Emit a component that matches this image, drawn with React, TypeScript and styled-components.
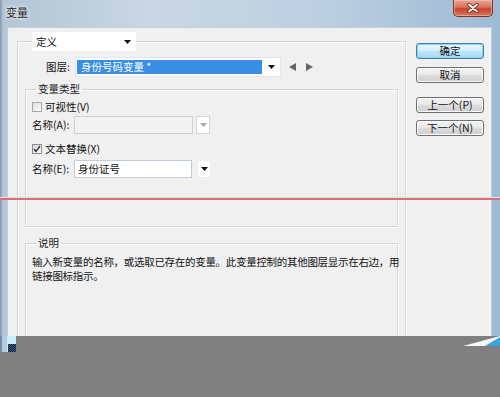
import React from "react";
import styled, { createGlobalStyle } from "styled-components";

const Global = createGlobalStyle`
  html, body { margin: 0; padding: 0; background: #808080; }
  body {
    width: 500px; height: 397px; overflow: hidden;
    font-family: "Noto Sans CJK SC", "Noto Sans", sans-serif;
    font-size: 10.5px; color: #111;
  }
  * { box-sizing: border-box; }
`;

const Screen = styled.div`
  position: relative;
  width: 500px;
  height: 397px;
  overflow: hidden;
  background: #808080;
`;

const Window = styled.div`
  width: 500px;
  height: 336px;
  display: flex;
  flex-direction: column;
  overflow: hidden;
  background: linear-gradient(to right, #7f95ab 0, #b3c5d6 3px, #c9d7e4 30%, #bccfe0 65%, #9dbad4 100%);
`;

const TitleBar = styled.div`
  height: 27px;
  flex: none;
  display: flex;
  align-items: flex-start;
  justify-content: space-between;
  padding: 0 7px 0 6px;
`;

const Title = styled.div`
  padding-top: 5px;
  font-size: 11px;
  line-height: 14px;
  color: #1a1a1a;
  text-shadow: 0 0 4px #ffffff, 0 0 2px #ffffff;
`;

const CloseButton = styled.div`
  width: 40px;
  height: 17px;
  display: flex;
  align-items: center;
  justify-content: center;
  border: 1px solid #7a3326;
  border-top: none;
  border-radius: 0 0 5px 5px;
  background: linear-gradient(#e9a998 0%, #d9705c 45%, #c5432c 55%, #d8775f 100%);
  box-shadow: inset 0 0 0 1px rgba(255, 200, 190, 0.5);
`;

const Client = styled.div`
  flex: 1;
  display: flex;
  margin: 0 8px 0 7px;
  background: #f0f0f0;
  border: 1px solid #c3d0dc;
  border-bottom: none;
`;

const MainColumn = styled.div`
  padding: 4px 0 0 9px;
`;

const Group = styled.fieldset<{ $width?: number; $mt?: number; $pb?: number }>`
  margin: ${(p) => p.$mt ?? 0}px 7px 0 7px;
  padding: 0 0 ${(p) => p.$pb ?? 0}px 0;
  min-width: 0;
  border: 1px solid #d3d7db;
  box-shadow: inset 1px 1px 0 #ffffff, 1px 1px 0 #ffffff;
  ${(p) => (p.$width ? `width: ${p.$width}px;` : "")}
`;

const OuterGroup = styled(Group)`
  margin: 0;
  height: 320px;
`;

const SelectLegend = styled.legend`
  margin-left: 14px;
  width: 104px;
  height: 19px;
  display: flex;
  align-items: center;
  justify-content: space-between;
  padding: 0 5px 0 4px;
  background: #ffffff;
  line-height: 14px;
`;

const TextLegend = styled.legend`
  margin-left: 10px;
  padding: 0 2px;
  height: 14px;
  line-height: 14px;
  color: #1a1a1a;
`;

const LayerRow = styled.div`
  display: flex;
  align-items: center;
  margin-top: 6px;
  padding-left: 28px;
  height: 20px;
`;

const RowLabel = styled.span<{ $w: number }>`
  width: ${(p) => p.$w}px;
  flex: none;
  line-height: 14px;
  white-space: nowrap;
`;

const Combo = styled.div`
  width: 206px;
  height: 20px;
  display: flex;
  padding: 2px 0 2px 1px;
  background: #ffffff;
  border: 1px solid #e3e7eb;
`;

const Selected = styled.div`
  flex: 1;
  background: #3a8ee6;
  color: #ffffff;
  padding-left: 4px;
  line-height: 14px;
  white-space: nowrap;
`;

const ArrowCell = styled.div`
  width: 18px;
  display: flex;
  align-items: center;
  justify-content: center;
`;

const NavArrows = styled.div`
  display: flex;
  gap: 10px;
  margin-left: 8px;
  align-items: center;
`;

const Body = styled.div<{ $pl: number }>`
  padding-left: ${(p) => p.$pl}px;
`;

const CheckRow = styled.label<{ $mt: number }>`
  display: flex;
  align-items: center;
  height: 13px;
  margin-top: ${(p) => p.$mt}px;
  line-height: 13px;
  gap: 3px;
`;

const Box = styled.span<{ $checked?: boolean }>`
  width: 10px;
  height: 10px;
  flex: none;
  border: 1px solid ${(p) => (p.$checked ? "#8c8c8c" : "#a9a9a9")};
  background: linear-gradient(135deg, #dcdcdc, #fbfbfb);
  display: flex;
  align-items: center;
  justify-content: center;
`;

const FieldRow = styled.div<{ $mt: number }>`
  display: flex;
  align-items: center;
  height: 18px;
  margin-top: ${(p) => p.$mt}px;
`;

const Input = styled.div<{ $disabled?: boolean; $w: number }>`
  width: ${(p) => p.$w}px;
  height: 18px;
  padding-left: 3px;
  line-height: 16px;
  background: ${(p) => (p.$disabled ? "#f2f2f2" : "#ffffff")};
  border: 1px solid ${(p) => (p.$disabled ? "#cfcfcf" : "#c2ccd6")};
`;

const DropButton = styled.div<{ $disabled?: boolean; $ml: number }>`
  width: 14px;
  height: 18px;
  margin-left: ${(p) => p.$ml}px;
  display: flex;
  align-items: center;
  justify-content: center;
  background: #ffffff;
  border: 1px solid ${(p) => (p.$disabled ? "#d6d6d6" : "#eeeeee")};
`;

const DescText = styled.p`
  margin: 5px 0 0 0;
  padding-left: 6px;
  line-height: 14px;
  letter-spacing: -0.3px;
  white-space: nowrap;
`;

const ButtonColumn = styled.div`
  display: flex;
  flex-direction: column;
  padding: 15px 0 0 10px;
`;

const DialogButton = styled.button<{ $primary?: boolean; $mt: number }>`
  width: 68px;
  height: 16px;
  margin-top: ${(p) => p.$mt}px;
  padding: 0;
  font-family: inherit;
  font-size: 10.5px;
  line-height: 14px;
  color: #111;
  border-radius: 3px;
  border: 1px solid ${(p) => (p.$primary ? "#3c7fb1" : "#707070")};
  background: ${(p) =>
    p.$primary
      ? "linear-gradient(#eaf6fd 0%, #d9f0fc 45%, #bee6fd 50%, #a7d9f5 100%)"
      : "linear-gradient(#f2f2f2 0%, #ebebeb 45%, #dddddd 50%, #cfcfcf 100%)"};
  box-shadow: inset 0 0 0 1px ${(p) => (p.$primary ? "#8fd3f5" : "#fbfbfb")};
`;

const RedRule = styled.div`
  position: absolute;
  left: 0;
  top: 198px;
  width: 500px;
  height: 2px;
  background: #e2697a;
  box-shadow: 0 -1px 0 #d4ece0;
`;

const CornerLeft = styled.div`
  position: absolute;
  left: 0;
  top: 336px;
  width: 16px;
  height: 16px;
  background: linear-gradient(to right, #6f8fb0 0, #6f8fb0 2px, #b7c8d8 2px, #b7c8d8 7px, #c8f0ff 7px);
`;

const Checker = styled.div`
  position: absolute;
  left: 8px;
  top: 8px;
  width: 8px;
  height: 8px;
  background: repeating-conic-gradient(#0f2740 0 25%, #3a5a78 0 50%) 0 0 / 2px 2px;
`;

const CornerRight = styled.svg`
  position: absolute;
  left: 463px;
  top: 336px;
`;

const Down = ({ color = "#111" }: { color?: string }) => (
  <svg width="7" height="4" viewBox="0 0 7 4">
    <path d="M0 0h7L3.5 4z" fill={color} />
  </svg>
);

export default function App() {
  return (
    <Screen>
      <Global />
      <Window>
        <TitleBar>
          <Title>变量</Title>
          <CloseButton>
            <svg width="12" height="10" viewBox="0 0 12 10">
              <path d="M2 1.5l8 7M10 1.5l-8 7" stroke="#5b2219" strokeWidth="3.4" strokeLinecap="round" />
              <path d="M2 1.5l8 7M10 1.5l-8 7" stroke="#ffffff" strokeWidth="1.8" strokeLinecap="round" />
            </svg>
          </CloseButton>
        </TitleBar>
        <Client>
          <MainColumn>
            <OuterGroup $width={389}>
              <SelectLegend>
                <span>定义</span>
                <Down />
              </SelectLegend>
              <LayerRow>
                <RowLabel $w={29}>图层:</RowLabel>
                <Combo>
                  <Selected>身份号码变量 *</Selected>
                  <ArrowCell>
                    <Down />
                  </ArrowCell>
                </Combo>
                <NavArrows>
                  <svg width="7" height="8" viewBox="0 0 7 8">
                    <path d="M7 0v8L0 4z" fill="#666" />
                  </svg>
                  <svg width="7" height="8" viewBox="0 0 7 8">
                    <path d="M0 0v8l7-4z" fill="#666" />
                  </svg>
                </NavArrows>
              </LayerRow>

              <Group $mt={5} $pb={48}>
                <TextLegend>变量类型</TextLegend>
                <Body $pl={6}>
                  <CheckRow $mt={4}>
                    <Box />
                    <span>可视性(V)</span>
                  </CheckRow>
                  <FieldRow $mt={3}>
                    <RowLabel $w={42}>名称(A):</RowLabel>
                    <Input $disabled $w={119} />
                    <DropButton $disabled $ml={3}>
                      <Down color="#a8a8a8" />
                    </DropButton>
                  </FieldRow>
                  <CheckRow $mt={8}>
                    <Box $checked>
                      <svg width="8" height="8" viewBox="0 0 8 8">
                        <path d="M1 4l2 2.5L7 1" stroke="#2a2a2a" strokeWidth="1.3" fill="none" />
                      </svg>
                    </Box>
                    <span>文本替换(X)</span>
                  </CheckRow>
                  <FieldRow $mt={5}>
                    <RowLabel $w={42}>名称(E):</RowLabel>
                    <Input $w={118}>身份证号</Input>
                    <DropButton $ml={5}>
                      <Down />
                    </DropButton>
                  </FieldRow>
                </Body>
              </Group>

              <Group $mt={9} $pb={80}>
                <TextLegend>说明</TextLegend>
                <DescText>
                  输入新变量的名称，或选取已存在的变量。此变量控制的其他图层显示在右边，用
                  <br />
                  链接图标指示。
                </DescText>
              </Group>
            </OuterGroup>
          </MainColumn>
          <ButtonColumn>
            <DialogButton $primary $mt={0}>确定</DialogButton>
            <DialogButton $mt={8}>取消</DialogButton>
            <DialogButton $mt={14}>上一个(P)</DialogButton>
            <DialogButton $mt={7}>下一个(N)</DialogButton>
          </ButtonColumn>
        </Client>
      </Window>
      <RedRule />
      <CornerLeft>
        <Checker />
      </CornerLeft>
      <CornerRight width="37" height="10" viewBox="0 0 37 10">
        <path d="M0 10L37 0v10z" fill="#f4f8fb" />
        <path d="M22 10L37 1v9z" fill="#3aa4de" />
      </CornerRight>
    </Screen>
  );
}
